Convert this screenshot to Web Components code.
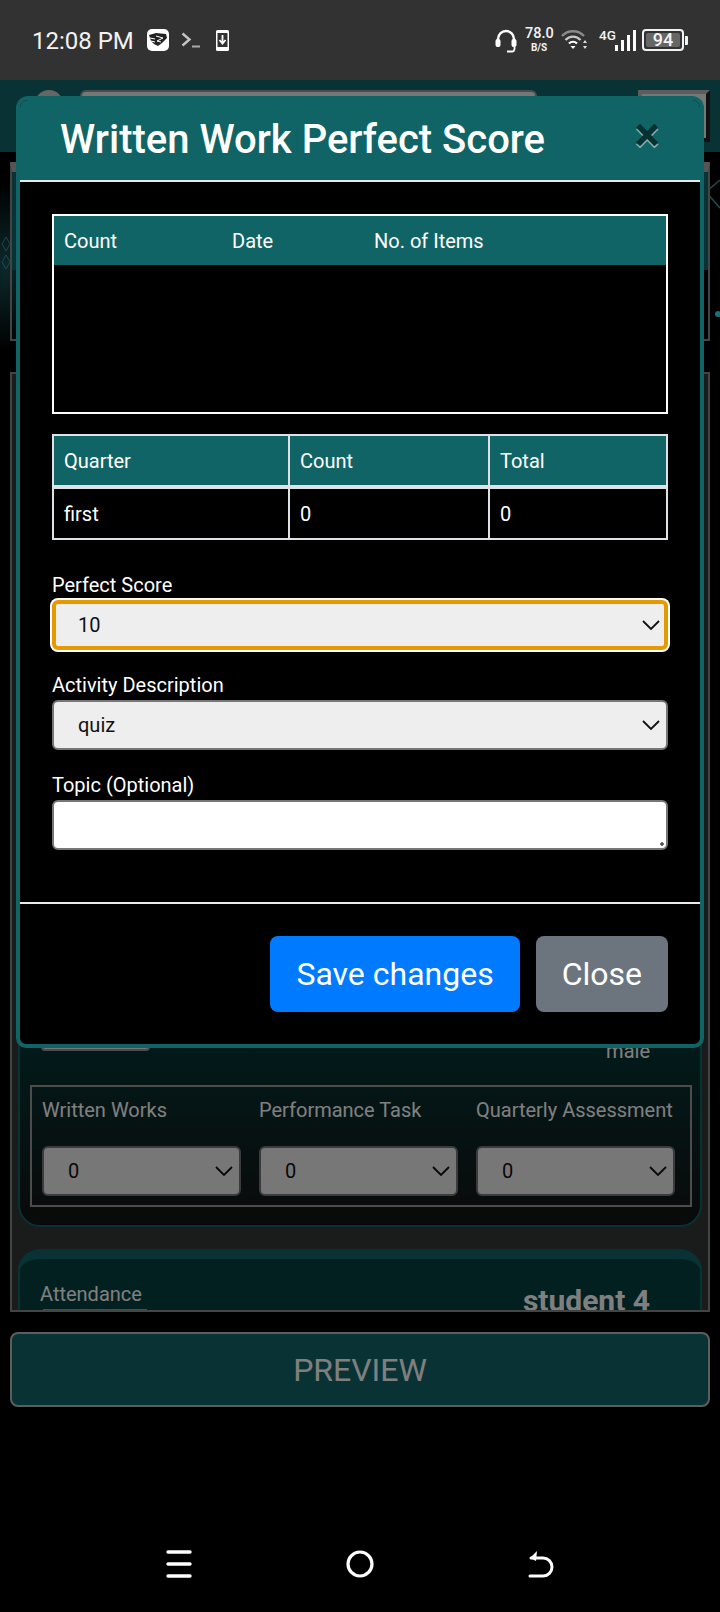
<!DOCTYPE html>
<html lang="en">
<head>
<meta charset="utf-8">
<title>Written Work Perfect Score</title>
<style>
  html, body { margin: 0; height: 1612px; background: #000; overflow: hidden; }
  body { position: relative; font-family: Roboto, "Liberation Sans", sans-serif; color: #fff; }
</style>
</head>
<body>
<status-bar></status-bar>
<top-bar></top-bar>
<hero-banner></hero-banner>
<grade-frame></grade-frame>
<preview-button>PREVIEW</preview-button>
<nav-bar></nav-bar>
<modal-backdrop>
  <score-modal title="Written Work Perfect Score"></score-modal>
</modal-backdrop>

<script>
// tiny base so every element just declares its css + markup
class Base extends HTMLElement {
  constructor() {
    super();
    this.attachShadow({ mode: "open" });
  }
  connectedCallback() {
    this.shadowRoot.innerHTML = `<style>${this.css()}</style>${this.html()}`;
  }
  css() { return ":host { display: block; }"; }
  html() { return "<slot></slot>"; }
}

class StatusBar extends Base {
  css() {
    return `
      :host { display: flex; align-items: center; height: 80px; box-sizing: border-box; padding: 0 32px; background: #323232; color: #f2f2f2; }
      .time { font-size: 24px; width: 115px; margin-top: 2px; }
      svg { display: block; flex: none; }
      .speed { width: 28px; margin: 0 8px; text-align: center; font-weight: 500; line-height: 1; }
      .speed b { display: block; font-size: 14.5px; font-weight: 500; }
      .speed i { display: block; font-size: 10px; font-style: normal; font-weight: 700; margin-top: 1px; }
      .net { font-size: 13.5px; font-weight: 500; width: 16px; margin: -11px 0 0 12px; white-space: nowrap; }
      .bat { width: 42px; height: 22px; box-sizing: border-box; margin-left: 6px; border: 2px solid #f2f2f2; border-radius: 4px; padding: 2px; }
      .bat span { display: block; height: 14px; background: #666; border-radius: 2px; font-size: 18px; font-weight: 500; line-height: 14px; text-align: center; }
      .nub { width: 3px; height: 9px; margin-left: 1px; background: #f2f2f2; border-radius: 0 1px 1px 0; }
      .grow { flex: 1; }
    `;
  }
  html() {
    return `
      <span class="time">12:08 PM</span>
      <svg width="22" height="22" viewBox="0 0 22 22"><rect width="22" height="22" rx="5" fill="#fff"/><path d="M2 6l7-2 10 1 1 4-5 5-4 3-4-2-3-3z" fill="#222"/><path d="M3 9l5 1M4 12l4 1M9 7l7 2-6 3 4 1" fill="none" stroke="#fff" stroke-width="1"/></svg>
      <svg style="margin-left:12px" width="19" height="16" viewBox="0 0 19 16"><path d="M1.5 1.500l7 6-7 6" fill="none" stroke="#c4c4c4" stroke-width="2.4"/><path d="M11 14.500h8" stroke="#aaa" stroke-width="2"/></svg>
      <svg style="margin-left:16px" width="13" height="21" viewBox="0 0 13 21"><rect width="13" height="21" rx="1.5" fill="#fff"/><rect x="1.5" y="3" width="10" height="14" fill="#323232"/><path d="M6.500 5v8M3.500 10l3 3.500 3-3.500" fill="none" stroke="#fff" stroke-width="1.8"/></svg>
      <span class="grow"></span>
      <svg width="22" height="25" viewBox="0 0 22 25"><path d="M3 15V11a8 8 0 0 1 16 0v4" fill="none" stroke="#fff" stroke-width="2.4"/><rect x="0.5" y="11" width="5" height="8" rx="2" fill="#fff"/><rect x="16.500" y="11" width="5" height="8" rx="2" fill="#fff"/><path d="M19.500 19v2a2.500 2.500 0 0 1-2.500 2.500h-5" fill="none" stroke="#fff" stroke-width="1.8"/></svg>
      <span class="speed"><b>78.0</b><i>B/S</i></span>
      <svg width="26" height="20" viewBox="0 0 26 20"><path d="M1 6a15 15 0 0 1 22 0" fill="none" stroke="#8a8a8a" stroke-width="2.4"/><path d="M4.500 10a10 10 0 0 1 15 0" fill="none" stroke="#c8c8c8" stroke-width="2.4"/><path d="M8 13.500a5.500 5.500 0 0 1 8 0" fill="none" stroke="#fff" stroke-width="2.2"/><path d="M9.500 16h5L12 19z" fill="#fff"/><path d="M22 13h4l-2-3zM22 16h4l-2 3z" fill="#ddd"/></svg>
      <span class="net">4G</span>
      <svg width="21" height="21" viewBox="0 0 21 21"><rect x="0" y="15" width="3" height="6" fill="#fff"/><rect x="6" y="10" width="3" height="11" fill="#fff"/><rect x="12" y="5" width="3" height="16" fill="#fff"/><rect x="18" y="0" width="3" height="21" fill="#fff"/></svg>
      <div class="bat"><span>94</span></div>
      <div class="nub"></div>
    `;
  }
}

class TopBar extends Base {
  css() {
    return `
      :host { display: flex; height: 72px; box-sizing: border-box; padding: 10px 10px 0 35px; background: #116466; }
      .avatar { width: 28px; height: 28px; border-radius: 50%; background: #ccc; }
      .search { width: 457px; height: 40px; box-sizing: border-box; margin-left: 17px; background: #eee; border: 2px solid #999; border-radius: 6px; }
      .btn { width: 72px; height: 52px; box-sizing: border-box; margin-left: auto; background: #eee; border: 4px solid; border-color: #bbb #222 #222 #bbb; }
    `;
  }
  html() {
    return `<div class="avatar"></div><div class="search"></div><div class="btn"></div>`;
  }
}

class HeroBanner extends Base {
  css() {
    return `
      :host { display: block; position: relative; height: 209px; box-sizing: border-box; padding: 10px 10px 20px; background: #000; overflow: hidden; }
      .bg { position: absolute; inset: 0; width: 100%; height: 100%; }
      .box { position: relative; height: 179px; box-sizing: border-box; border: 2px solid #888; border-top: 10px solid #aaa; }
      .band { height: 98px; background: #116466; }
    `;
  }
  html() {
    return `
      <svg class="bg" viewBox="0 0 720 209">
        <defs><radialGradient id="g"><stop offset="0" stop-color="#2a8a90" stop-opacity=".6"/><stop offset="1" stop-color="#2a8a90" stop-opacity="0"/></radialGradient></defs>
        <rect x="-40" y="30" width="90" height="170" fill="url(#g)"/>
        <path d="M2 92l4-7 4 7-4 7zM2 110l4-7 4 7-4 7z" fill="none" stroke="#3d8f94" stroke-width="1"/>
        <path d="M706 40l14-12M706 40l14 16" stroke="#4d8f94" stroke-width="1.500"/>
        <circle cx="718" cy="162" r="3" fill="#33e0ee"/>
      </svg>
      <div class="box"><div class="band"></div></div>
    `;
  }
}

class FieldSelect extends Base {
  css() {
    return `
      :host { display: block; position: relative; height: 50px; }
      select { display: block; width: 100%; height: 100%; box-sizing: border-box; appearance: none; -webkit-appearance: none; margin: 0; padding: 0 0 0 24px; background: #eee; border: 2px solid #767676; border-radius: 6px; font: 20px Roboto, "Liberation Sans", sans-serif; color: #111; outline: none; }
      :host([focused]) select { border: 4px solid #e69a00; padding-left: 22px; box-shadow: 0 0 0 2px #fff; }
      svg { position: absolute; right: 8px; top: 20px; pointer-events: none; }
    `;
  }
  html() {
    const value = this.getAttribute("value");
    return `
      <select><option>${value}</option></select>
      <svg width="18" height="11" viewBox="0 0 18 11"><path d="M1 1l8 8 8-8" fill="none" stroke="#111" stroke-width="1.800"/></svg>
    `;
  }
}

class GradeCard extends Base {
  css() {
    return `
      :host { display: flex; flex-direction: column; justify-content: flex-end; height: 847px; box-sizing: border-box; padding: 0 8px 18px 10px; border: 2px solid #116466; border-radius: 22px; background: linear-gradient(#116466 0, #063434 79%, #141414 100%); font-size: 20px; }
      .who { display: flex; justify-content: space-between; align-items: flex-start; margin-bottom: 19px; padding: 0 42px 0 11px; }
      .stub { width: 109px; height: 40px; box-sizing: border-box; margin-top: -25px; background: #eee; border: 2px solid #999; border-radius: 4px; }
      .who span { line-height: 30px; }
      .box { display: grid; grid-template-columns: repeat(3, 199px); column-gap: 18px; box-sizing: border-box; height: 122px; padding: 8px 0 0 10px; border: 2px solid #999; }
      .lab { display: block; line-height: 30px; margin-bottom: 21px; white-space: nowrap; }
    `;
  }
  html() {
    const col = (t) => `<div><span class="lab">${t}</span><field-select value="0"></field-select></div>`;
    return `
      <div class="who"><div class="stub"></div><span>male</span></div>
      <div class="box">${col("Written Works")}${col("Performance Task")}${col("Quarterly Assessment")}</div>
    `;
  }
}

class StudentCard extends Base {
  css() {
    return `
      :host { display: flex; justify-content: space-between; margin-top: 22px; height: 200px; box-sizing: border-box; padding: 20px 50px 0 20px; border: 2px solid #116466; border-top: 10px solid #116466; border-radius: 22px; background: #064042; }
      .lab { font-size: 20px; line-height: 30px; }
      .line { width: 104px; height: 30px; box-sizing: border-box; margin: 0 0 0 3px; background: #eee; border: 2px solid #999; }
      .name { font-size: 30px; font-weight: 700; line-height: 34px; margin-top: 5px; }
    `;
  }
  html() {
    return `<div><div class="lab">Attendance</div><div class="line"></div></div><div class="name">student 4</div>`;
  }
}

class GradeFrame extends Base {
  css() {
    return `
      :host { display: block; height: 940px; box-sizing: border-box; margin: 11px 10px 0; padding: 6px 6px 0; border: 2px solid #888; background: #343838; overflow: hidden; }
    `;
  }
  html() {
    return `<grade-card></grade-card><student-card></student-card>`;
  }
}

class PreviewButton extends Base {
  css() {
    return `
      :host { display: flex; align-items: center; justify-content: center; height: 75px; box-sizing: border-box; margin: 20px 10px 0; background: #116466; border: 2px solid #bbb; border-radius: 8px; font-size: 32px; }
    `;
  }
}

class NavBar extends Base {
  css() {
    return `
      :host { display: flex; justify-content: center; gap: 154px; padding-top: 143px; }
      svg { display: block; }
    `;
  }
  html() {
    return `
      <svg width="26" height="28" viewBox="0 0 26 28"><g fill="none" stroke="#fff" stroke-width="3.4" stroke-linecap="round"><path d="M2 2h22M2 14h22M2 26h22"/></g></svg>
      <svg width="28" height="28" viewBox="0 0 28 28"><circle cx="14" cy="14" r="12" fill="none" stroke="#fff" stroke-width="3.2"/></svg>
      <svg width="26" height="28" viewBox="0 0 26 28"><path d="M2 26h13a9 9 0 0 0 0-18H3" fill="none" stroke="#fff" stroke-width="3" stroke-linecap="round"/><path d="M9 1L2 8l6 3z" fill="#fff"/></svg>
    `;
  }
}

class ModalBackdrop extends Base {
  css() {
    return `
      :host { display: block; position: absolute; top: 80px; left: 0; right: 0; bottom: 205px; background: rgba(0, 0, 0, .5); }
    `;
  }
}

class InfoTable extends Base {
  css() {
    return `
      :host { display: block; }
      table { width: 100%; table-layout: fixed; box-sizing: border-box; border-collapse: separate; border-spacing: 0; border: 2px solid var(--line, #fff); font-size: 20px; }
      th, td { padding: 0 0 0 10px; text-align: left; font-weight: 400; height: 49px; box-sizing: border-box; }
      th { background: #116466; }
      td { background: #000; }
      :host([grid]) th, :host([grid]) td { border-right: 2px solid var(--line); }
      :host([grid]) th { height: 53px; border-bottom: 4px solid var(--line); }
      :host([grid]) th:last-child, :host([grid]) td:last-child { border-right: 0; }
      .empty td { height: 147px; }
    `;
  }
  html() {
    const cols = JSON.parse(this.getAttribute("cols"));
    const heads = JSON.parse(this.getAttribute("heads"));
    const row = JSON.parse(this.getAttribute("row") || "null");
    return `
      <table>
        <colgroup>${cols.map((c) => `<col style="width:${c}">`).join("")}</colgroup>
        <thead><tr>${heads.map((h) => `<th>${h}</th>`).join("")}</tr></thead>
        <tbody>${row
          ? `<tr>${row.map((c) => `<td>${c}</td>`).join("")}</tr>`
          : `<tr class="empty"><td colspan="${heads.length}"></td></tr>`}</tbody>
      </table>
    `;
  }
}

class ScoreModal extends Base {
  css() {
    return `
      :host { display: block; position: absolute; top: 16px; left: 16px; width: 688px; box-sizing: border-box; border: 4px solid #116466; border-radius: 12px 12px 10px 10px; background: #000; font-size: 20px; }
      header { display: flex; align-items: center; justify-content: space-between; height: 80px; box-sizing: border-box; padding: 0 40px 0 40px; background: #116466; border-radius: 8px 8px 0 0; }
      h1 { margin: 0; font-size: 40px; font-weight: 500; line-height: 78px; }
      .close { padding: 0; border: 0; background: none; font: 700 48px/1 Roboto, sans-serif; color: #000; opacity: .5; text-shadow: 0 2px 0 #fff; margin-top: -10px; }
      .rule { height: 2px; background: #e8eaec; }
      .body { padding: 32px 32px 0; height: 720px; box-sizing: border-box; }
      info-table + info-table { margin-top: 20px; }
      .grid { --line: #dee2e6; }
      label { display: block; margin-top: 20px; line-height: 30px; }
      label.first { margin-top: 30px; }
      textarea { display: block; width: 100%; height: 50px; box-sizing: border-box; margin: 0; resize: none; background: radial-gradient(circle, #555 1.5px, transparent 2px) no-repeat right 2px bottom 2px / 4px 4px, #fff; border: 2px solid #767676; border-radius: 6px; }
      footer { display: flex; justify-content: flex-end; gap: 16px; padding: 32px; border-top: 2px solid #e8eaec; }
      button.act { height: 76px; box-sizing: border-box; padding: 0 26px; border: 0; border-radius: 8px; font: 32px Roboto, sans-serif; color: #fff; }
      .save { background: #007bff; }
      .dismiss { background: #6c757d; }
    `;
  }
  html() {
    return `
      <header><h1>${this.getAttribute("title")}</h1><button class="close">×</button></header>
      <div class="rule"></div>
      <div class="body">
        <info-table cols='["168px","142px","auto"]' heads='["Count","Date","No. of Items"]'></info-table>
        <info-table class="grid" grid cols='["236px","200px","auto"]' heads='["Quarter","Count","Total"]' row='["first","0","0"]'></info-table>
        <label class="first">Perfect Score</label>
        <field-select value="10" focused></field-select>
        <label>Activity Description</label>
        <field-select value="quiz"></field-select>
        <label>Topic (Optional)</label>
        <textarea></textarea>
      </div>
      <footer>
        <button class="act save">Save changes</button>
        <button class="act dismiss">Close</button>
      </footer>
    `;
  }
}

customElements.define("status-bar", StatusBar);
customElements.define("top-bar", TopBar);
customElements.define("hero-banner", HeroBanner);
customElements.define("field-select", FieldSelect);
customElements.define("grade-card", GradeCard);
customElements.define("student-card", StudentCard);
customElements.define("grade-frame", GradeFrame);
customElements.define("preview-button", PreviewButton);
customElements.define("nav-bar", NavBar);
customElements.define("modal-backdrop", ModalBackdrop);
customElements.define("info-table", InfoTable);
customElements.define("score-modal", ScoreModal);
</script>
</body>
</html>
